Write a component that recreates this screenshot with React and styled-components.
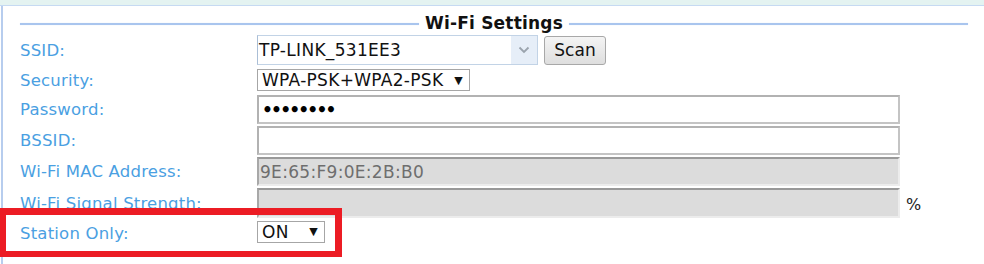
import React from "react";
import styled, { createGlobalStyle } from "styled-components";

const Global = createGlobalStyle`
  html, body { margin: 0; padding: 0; background: #fff; }
  body { font-family: "DejaVu Sans", Verdana, sans-serif; }
`;

const Frame = styled.div`
  position: relative;
  width: 984px;
  height: 264px;
  overflow: hidden;
  background: #fff;
`;

const TopBand = styled.div`
  height: 5px;
  background: #e4f3f1;
  border-bottom: 1px solid #c6daf2;
`;

const Panel = styled.div`
  margin-left: 1px;
  border-left: 2px solid #b7cdee;
  padding: 9px 0 0 17px;
  height: 258px;
  box-sizing: border-box;
`;

const Legend = styled.div`
  display: flex;
  align-items: center;
  width: 948px;
  gap: 6px;
  height: 16px;
`;

const Rule = styled.div`
  flex: 1;
  height: 2px;
  margin-top: 1px;
  background: #a9c5ee;
  box-shadow: 0 0 1px #c8dbf6;
`;

const LegendText = styled.span`
  font-weight: bold;
  font-size: 17px;
  color: #111;
  letter-spacing: 0.2px;
`;

const Rows = styled.div`
  display: flex;
  flex-direction: column;
  margin-top: 4px;
`;

const Row = styled.div`
  display: flex;
  align-items: center;
  height: ${(p) => p.h}px;
  margin-bottom: ${(p) => p.mb ?? 2}px;
`;

const Label = styled.div`
  width: 237px;
  flex: none;
  color: #4aa0e2;
  font-size: 16.5px;
  letter-spacing: 0.2px;
  margin-top: ${(p) => p.dy || 0}px;
`;

const Field = styled.div`
  display: flex;
  align-items: center;
  gap: 6px;
  font-size: 17px;
  letter-spacing: 0.3px;
  color: #111;
`;

const Combo = styled.div`
  display: flex;
  width: 281px;
  height: 30px;
  box-sizing: border-box;
  border: 1px solid #c2d3e6;
  border-left-color: #aabed6;
`;

const ComboText = styled.div`
  flex: 1;
  display: flex;
  align-items: center;
  padding-left: 1px;
  background: #fff;
`;

const ComboArrow = styled.div`
  width: 26px;
  display: flex;
  align-items: center;
  justify-content: center;
  background: #e6eef8;
`;

const Button = styled.div`
  width: 62px;
  height: 29px;
  box-sizing: border-box;
  border: 1px solid #a8a8a8;
  border-radius: 3px;
  background: linear-gradient(#f4f4f4, #dedede);
  display: flex;
  align-items: center;
  justify-content: center;
  font-size: 17px;
  letter-spacing: 0;
  color: #111;
`;

const Select = styled.div`
  width: ${(p) => p.w}px;
  height: 22px;
  box-sizing: border-box;
  border: 1px solid #a6a6a6;
  display: flex;
  align-items: center;
  justify-content: space-between;
  padding: 0 6px 0 4px;
  background: #fff;
`;

const Arrow = styled.span`
  font-size: 11px;
  color: #111;
`;

const TextBox = styled.div`
  width: 643px;
  height: ${(p) => p.h || 29}px;
  box-sizing: border-box;
  display: flex;
  align-items: center;
  padding-left: 1px;
  ${(p) =>
    p.disabled
      ? `
    background: #dcdcdc;
    border-top: 2px solid #999;
    border-left: 2px solid #a8a8a8;
    border-right: 2px solid #ececec;
    border-bottom: 2px solid #ececec;
    color: #6e6e6e;
  `
      : `
    background: #fff;
    border: 2px solid #c4c4c4;
    border-top-color: #b2b2b2;
    border-left-color: #b2b2b2;
  `}
`;

const Dots = styled.span`
  font-size: 17px;
  letter-spacing: -1.8px;
  font-weight: bold;
  padding-left: 2px;
  color: #000;
`;

const Unit = styled.span`
  font-size: 16px;
  color: #222;
  letter-spacing: 0;
  margin-top: 2px;
`;

const Highlight = styled.div`
  position: absolute;
  left: 0;
  top: 208px;
  width: 342px;
  height: 49px;
  box-sizing: border-box;
  border: 6px solid #ec1c24;
  border-top-width: 7px;
  border-right-width: 7px;
  pointer-events: none;
`;

export default function App() {
  return (
    <Frame>
      <Global />
      <TopBand />
      <Panel>
        <Legend>
          <Rule />
          <LegendText>Wi-Fi Settings</LegendText>
          <Rule />
        </Legend>
        <Rows>
          <Row h={30} mb={4}>
            <Label>SSID:</Label>
            <Field>
              <Combo>
                <ComboText>TP-LINK_531EE3</ComboText>
                <ComboArrow>
                  <svg width="12" height="8" viewBox="0 0 12 8">
                    <path d="M1.5 1.5 L6 6 L10.5 1.5" fill="none" stroke="#9aa3ad" strokeWidth="1.8" />
                  </svg>
                </ComboArrow>
              </Combo>
              <Button>Scan</Button>
            </Field>
          </Row>
          <Row h={22} mb={4}>
            <Label>Security:</Label>
            <Field>
              <Select w={213}>
                <span>WPA-PSK+WPA2-PSK</span>
                <Arrow>▼</Arrow>
              </Select>
            </Field>
          </Row>
          <Row h={29} mb={2}>
            <Label>Password:</Label>
            <Field>
              <TextBox>
                <Dots>••••••••</Dots>
              </TextBox>
            </Field>
          </Row>
          <Row h={29} mb={2}>
            <Label>BSSID:</Label>
            <Field>
              <TextBox />
            </Field>
          </Row>
          <Row h={29} mb={2}>
            <Label>Wi-Fi MAC Address:</Label>
            <Field>
              <TextBox disabled>9E:65:F9:0E:2B:B0</TextBox>
            </Field>
          </Row>
          <Row h={30} mb={2}>
            <Label>Wi-Fi Signal Strength:</Label>
            <Field>
              <TextBox disabled h={30} />
              <Unit>%</Unit>
            </Field>
          </Row>
          <Row h={23}>
            <Label dy={3}>Station Only:</Label>
            <Field>
              <Select w={68}>
                <span>ON</span>
                <Arrow>▼</Arrow>
              </Select>
            </Field>
          </Row>
        </Rows>
      </Panel>
      <Highlight />
    </Frame>
  );
}
